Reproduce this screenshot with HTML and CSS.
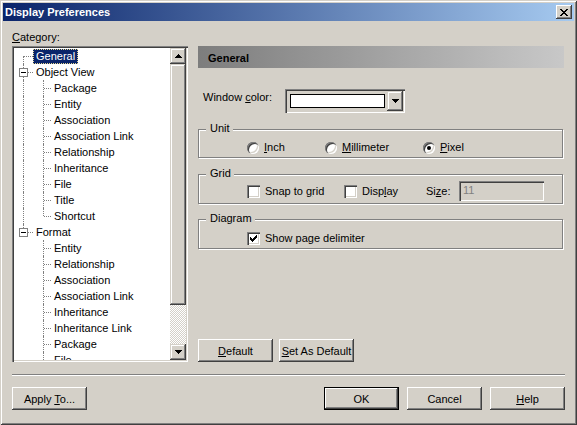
FILE: index.html
```html
<!DOCTYPE html>
<html lang="en">
<head>
    <meta charset="UTF-8">
    <title>Display Preferences</title>
    <link rel="stylesheet" href="styles.css">
</head>
<body>
<div class="window">
    <div class="titlebar">
        <span class="title">Display Preferences</span>
        <button class="close">
            <svg width="8" height="7" viewBox="0 0 8 7"><path d="M0 0h2v1h-2z M6 0h2v1h-2z M1 1h2v1h-2z M5 1h2v1h-2z M2 2h4v1h-4z M3 3h2v1h-2z M2 4h4v1h-4z M1 5h2v1h-2z M5 5h2v1h-2z M0 6h2v1h-2z M6 6h2v1h-2z"/></svg>
        </button>
    </div>

    <div class="content">
        <div class="main">
            <div class="left">
                <div class="cat-label"><u>C</u>ategory:</div>
                <div class="tree-box">
                    <div class="tree">
                        <div class="row"><span class="c down hl"></span><span class="lbl sel">General</span></div>
                        <div class="row"><span class="c vl hl"><span class="box"></span></span><span class="lbl">Object View</span></div>
                        <div class="row"><span class="c1 vl"></span><span class="c2 vl hl"></span><span class="lbl">Package</span></div>
                        <div class="row"><span class="c1 vl"></span><span class="c2 vl hl"></span><span class="lbl">Entity</span></div>
                        <div class="row"><span class="c1 vl"></span><span class="c2 vl hl"></span><span class="lbl">Association</span></div>
                        <div class="row"><span class="c1 vl"></span><span class="c2 vl hl"></span><span class="lbl">Association Link</span></div>
                        <div class="row"><span class="c1 vl"></span><span class="c2 vl hl"></span><span class="lbl">Relationship</span></div>
                        <div class="row"><span class="c1 vl"></span><span class="c2 vl hl"></span><span class="lbl">Inheritance</span></div>
                        <div class="row"><span class="c1 vl"></span><span class="c2 vl hl"></span><span class="lbl">File</span></div>
                        <div class="row"><span class="c1 vl"></span><span class="c2 vl hl"></span><span class="lbl">Title</span></div>
                        <div class="row"><span class="c1 vl"></span><span class="c2 up hl"></span><span class="lbl">Shortcut</span></div>
                        <div class="row"><span class="c up hl"><span class="box"></span></span><span class="lbl">Format</span></div>
                        <div class="row"><span class="c1"></span><span class="c2 vl hl"></span><span class="lbl">Entity</span></div>
                        <div class="row"><span class="c1"></span><span class="c2 vl hl"></span><span class="lbl">Relationship</span></div>
                        <div class="row"><span class="c1"></span><span class="c2 vl hl"></span><span class="lbl">Association</span></div>
                        <div class="row"><span class="c1"></span><span class="c2 vl hl"></span><span class="lbl">Association Link</span></div>
                        <div class="row"><span class="c1"></span><span class="c2 vl hl"></span><span class="lbl">Inheritance</span></div>
                        <div class="row"><span class="c1"></span><span class="c2 vl hl"></span><span class="lbl">Inheritance Link</span></div>
                        <div class="row"><span class="c1"></span><span class="c2 vl hl"></span><span class="lbl">Package</span></div>
                        <div class="row"><span class="c1"></span><span class="c2 vl hl"></span><span class="lbl">File</span></div>
                    </div>
                    <div class="scrollbar">
                        <div class="sb-btn">
                            <svg width="7" height="4" viewBox="0 0 7 4"><path d="M3 0h1v1h-1z M2 1h3v1h-3z M1 2h5v1h-5z M0 3h7v1h-7z"/></svg>
                        </div>
                        <div class="thumb"></div>
                        <div class="track"></div>
                        <div class="sb-btn">
                            <svg width="7" height="4" viewBox="0 0 7 4"><path d="M0 0h7v1h-7z M1 1h5v1h-5z M2 2h3v1h-3z M3 3h1v1h-1z"/></svg>
                        </div>
                    </div>
                </div>
            </div>

            <div class="right">
                <div class="page-head">General</div>

                <div class="color-row">
                    <span class="color-label">Window <u>c</u>olor:</span>
                    <div class="combo">
                        <span class="swatch"></span>
                        <span class="drop">
                            <svg width="7" height="4" viewBox="0 0 7 4"><path d="M0 0h7v1h-7z M1 1h5v1h-5z M2 2h3v1h-3z M3 3h1v1h-1z"/></svg>
                        </span>
                    </div>
                </div>

                <div class="group unit">
                    <span class="group-title">Unit</span>
                    <label class="opt w78"><span class="radio"></span><span><u>I</u>nch</span></label>
                    <label class="opt w98"><span class="radio"></span><span><u>M</u>illimeter</span></label>
                    <label class="opt"><span class="radio on"></span><span><u>P</u>ixel</span></label>
                </div>

                <div class="group grid">
                    <span class="group-title">Grid</span>
                    <label class="opt w97"><span class="check"></span><span>Snap to <u>g</u>rid</span></label>
                    <label class="opt w82"><span class="check"></span><span>Disp<u>l</u>ay</span></label>
                    <span class="size-label">Si<u>z</u>e:</span>
                    <span class="size-input">11</span>
                </div>

                <div class="group diagram">
                    <span class="group-title">Diagram</span>
                    <label class="opt">
                        <span class="check">
                            <svg width="7" height="7" viewBox="0 0 7 7"><path d="M0 2h1v3h-1z M1 3h1v3h-1z M2 4h1v3h-1z M3 3h1v3h-1z M4 2h1v3h-1z M5 1h1v3h-1z M6 0h1v3h-1z"/></svg>
                        </span>
                        <span>Show page delimiter</span>
                    </label>
                </div>

                <div class="page-buttons">
                    <button class="btn"><u>D</u>efault</button>
                    <button class="btn"><u>S</u>et As Default</button>
                </div>
            </div>
        </div>

        <div class="sep"></div>

        <div class="footer">
            <button class="btn apply">Apply <u>T</u>o...</button>
            <button class="btn default">OK</button>
            <button class="btn">Cancel</button>
            <button class="btn"><u>H</u>elp</button>
        </div>
    </div>
</div>
</body>
</html>
```

FILE: styles.css
```css
body{
    margin:0;
    font-family:"Liberation Sans", Arial, sans-serif;
    font-size:11px;
    color:#000;
    background-color:#d4d0c8;
}
u{
    text-decoration-thickness:1px;
    text-underline-offset:1px;
}
.window{
    width:577px;
    height:425px;
    box-sizing:border-box;
    padding:3px;
    display:flex;
    flex-direction:column;
    background-color:#d4d0c8;
    box-shadow:inset 1px 1px 0 #d4d0c8, inset -1px -1px 0 #404040,
               inset 2px 2px 0 #fff, inset -2px -2px 0 #808080;
}
.titlebar{
    height:18px;
    display:flex;
    align-items:center;
    padding:0 2px;
    background:linear-gradient(to right, #0a246a, #a6caf0);
}
.title{
    flex:1;
    color:#fff;
    font-weight:bold;
    line-height:18px;
}
.close{
    width:16px;
    height:14px;
    padding:0;
    border:none;
    display:flex;
    align-items:center;
    justify-content:center;
    background-color:#d4d0c8;
    box-shadow:inset -1px -1px 0 #404040, inset 1px 1px 0 #fff,
               inset -2px -2px 0 #808080;
}

.content{
    flex:1;
    display:flex;
    flex-direction:column;
    padding:0 9px;
}
.main{
    display:flex;
    gap:10px;
    margin-top:10px;
}
.left{
    width:176px;
}
.cat-label{
    line-height:13px;
    margin-bottom:2px;
}

/* tree view */
.tree-box{
    height:316px;
    box-sizing:border-box;
    padding:2px;
    display:flex;
    background-color:#fff;
    box-shadow:inset 1px 1px 0 #808080, inset 2px 2px 0 #404040,
               inset -1px -1px 0 #fff, inset -2px -2px 0 #d4d0c8;
}
.tree{
    flex:1;
    overflow:hidden;
}
.row{
    display:flex;
    height:16px;
    white-space:nowrap;
}
.c, .c1, .c2{
    position:relative;
    flex:none;
    height:16px;
}
.c{ width:19px; }
.c1{ width:20px; }
.c2{ width:17px; }
.vl::before, .up::before, .down::before{
    content:"";
    position:absolute;
    left:9px;
    top:0;
    height:16px;
    border-left:1px dotted #808080;
}
.up::before{ height:8px; }
.down::before{ top:8px; height:8px; }
.hl::after{
    content:"";
    position:absolute;
    left:10px;
    right:0;
    top:8px;
    border-top:1px dotted #808080;
}
.box{
    position:absolute;
    z-index:1;
    left:5px;
    top:4px;
    width:9px;
    height:9px;
    box-sizing:border-box;
    border:1px solid #808080;
    background-color:#fff;
}
.box::after{
    content:"";
    position:absolute;
    left:1px;
    top:3px;
    width:5px;
    height:1px;
    background-color:#000;
}
.lbl{
    padding:0 3px;
    line-height:16px;
}
.sel{
    height:15px;
    line-height:15px;
    margin-top:1px;
    box-sizing:border-box;
    background-color:#0a246a;
    color:#fff;
    outline:1px dotted #e6d890;
    outline-offset:-1px;
}

/* scrollbar */
.scrollbar{
    width:16px;
    display:flex;
    flex-direction:column;
}
.sb-btn, .thumb, .drop{
    background-color:#d4d0c8;
    box-shadow:inset -1px -1px 0 #404040, inset 1px 1px 0 #d4d0c8,
               inset -2px -2px 0 #808080, inset 2px 2px 0 #fff;
}
.sb-btn{
    height:16px;
    display:flex;
    align-items:center;
    justify-content:center;
}
.thumb{
    height:241px;
}
.track{
    flex:1;
    background:repeating-conic-gradient(#fff 0 25%, #d4d0c8 0 50%) 0 0/2px 2px;
}

/* right page */
.right{
    width:366px;
    margin-top:15px;
    display:flex;
    flex-direction:column;
}
.page-head{
    height:22px;
    box-sizing:border-box;
    padding:2px 0 0 10px;
    line-height:20px;
    font-weight:bold;
    background:linear-gradient(to right, #7d7d7d, #c8c8c8);
}
.color-row{
    display:flex;
    margin-top:21px;
    height:24px;
}
.color-label{
    width:82px;
    padding-left:5px;
    margin-top:2px;
    line-height:13px;
}
.combo{
    width:120px;
    height:24px;
    box-sizing:border-box;
    padding:2px;
    display:flex;
    box-shadow:inset 1px 1px 0 #808080, inset 2px 2px 0 #404040,
               inset -1px -1px 0 #fff, inset -2px -2px 0 #d4d0c8;
}
.swatch{
    flex:1;
    margin:3px 2px 3px 3px;
    border:1px solid #000;
    background-color:#fff;
}
.drop{
    width:16px;
    display:flex;
    align-items:center;
    justify-content:center;
}

.group{
    position:relative;
    display:flex;
    align-items:center;
    margin-right:1px;
    border:1px solid #808080;
    box-shadow:inset 1px 1px 0 #fff, 1px 1px 0 #fff;
}
.group-title{
    position:absolute;
    top:-8px;
    left:7px;
    padding:0 3px 0 4px;
    line-height:13px;
    background-color:#d4d0c8;
}
.unit{
    margin-top:16px;
    padding:11px 0 3px 48px;
}
.grid{
    margin-top:16px;
    padding:6px 0 2px 48px;
}
.diagram{
    margin-top:15px;
    padding:11px 0 3px 48px;
}
.opt{
    display:flex;
    align-items:center;
    gap:5px;
    height:13px;
    line-height:13px;
}
.diagram .opt{
    height:14px;
}
.w78{ width:78px; }
.w98{ width:98px; }
.w97{ width:97px; }
.w82{ width:82px; }
.radio{
    width:12px;
    height:12px;
    flex:none;
    border-radius:50%;
    display:flex;
    align-items:center;
    justify-content:center;
    background-color:#fff;
    box-shadow:inset 1px 1px 0 #808080, inset 2px 2px 0 #404040,
               inset -1px -1px 0 #fff, inset -2px -2px 0 #d4d0c8;
}
.radio.on::after{
    content:"";
    width:4px;
    height:4px;
    border-radius:50%;
    background-color:#000;
}
.check{
    width:13px;
    height:13px;
    flex:none;
    box-sizing:border-box;
    display:flex;
    align-items:center;
    justify-content:center;
    background-color:#fff;
    box-shadow:inset 1px 1px 0 #808080, inset 2px 2px 0 #404040,
               inset -1px -1px 0 #fff, inset -2px -2px 0 #d4d0c8;
}
.size-label{
    width:33px;
    line-height:13px;
}
.size-input{
    width:85px;
    height:20px;
    box-sizing:border-box;
    padding:3px 0 0 4px;
    line-height:13px;
    color:#808080;
    box-shadow:inset 1px 1px 0 #808080, inset 2px 2px 0 #404040,
               inset -1px -1px 0 #fff, inset -2px -2px 0 #d4d0c8;
}
.page-buttons{
    margin-top:auto;
    display:flex;
    gap:6px;
}

/* buttons */
.btn{
    width:75px;
    height:23px;
    padding:0;
    border:none;
    font-family:inherit;
    font-size:11px;
    color:#000;
    background-color:#d4d0c8;
    box-shadow:inset -1px -1px 0 #404040, inset 1px 1px 0 #fff,
               inset -2px -2px 0 #808080, inset 2px 2px 0 #d4d0c8;
}
.btn.default{
    border:1px solid #000;
}
.sep{
    margin-top:12px;
    border-top:1px solid #808080;
    border-bottom:1px solid #fff;
}
.footer{
    margin-top:11px;
    display:flex;
    gap:8px;
}
.apply{
    margin-right:auto;
}
```
